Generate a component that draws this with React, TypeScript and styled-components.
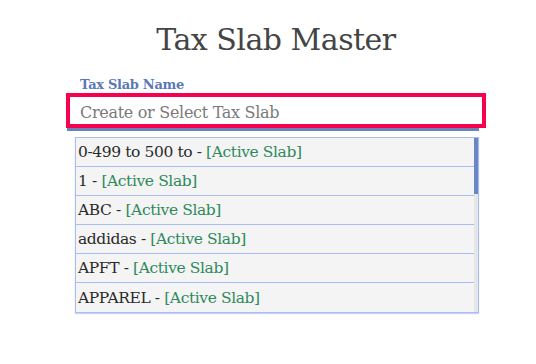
import React from "react";
import styled, { createGlobalStyle } from "styled-components";

const GlobalStyle = createGlobalStyle`
  html, body {
    margin: 0;
    padding: 0;
    background: #ffffff;
  }
  body {
    font-family: "DejaVu Serif", "Liberation Serif", serif;
  }
`;

const slabs = ["0-499 to 500 to", "1", "ABC", "addidas", "APFT", "APPAREL"];

const App: React.FC = () => {
  return (
    <Page>
      <GlobalStyle />
      <Title>Tax Slab Master</Title>
      <Field>
        <Label>Tax Slab Name</Label>
        <InputWrap>
          <Input placeholder="Create or Select Tax Slab" />
        </InputWrap>
        <List>
          <Rows>
            {slabs.map((s) => (
              <Row key={s}>
                {s} - <Status>[Active Slab]</Status>
              </Row>
            ))}
          </Rows>
          <Scroll>
            <Thumb />
          </Scroll>
        </List>
      </Field>
    </Page>
  );
};
export default App;

const Page = styled.div`
  width: 536px;
  height: 364px;
  display: flex;
  flex-direction: column;
  align-items: center;
  box-sizing: border-box;
  padding: 20px 0 0 16px;
`;

const Title = styled.h1`
  margin: 0;
  font-size: 30px;
  font-weight: normal;
  color: #444444;
  letter-spacing: -0.5px;
  line-height: 40px;
`;

const Field = styled.div`
  width: 420px;
  margin-top: 17px;
  display: flex;
  flex-direction: column;
`;

const Label = styled.div`
  font-size: 13px;
  font-weight: bold;
  color: #5b78b4;
  padding-left: 14px;
  line-height: 15px;
  letter-spacing: -0.3px;
`;

const InputWrap = styled.div`
  margin-top: 1px;
  border: 4px solid #f7004d;
  height: 27px;
  display: flex;
  align-items: center;
  position: relative;
  &::after {
    content: "";
    position: absolute;
    left: -3px;
    right: 3px;
    bottom: -7px;
    height: 3px;
    background: #6a82b6;
  }
`;

const Input = styled.input`
  border: none;
  outline: none;
  width: 100%;
  padding: 4px 0 0 10px;
  font-family: "DejaVu Serif", "Liberation Serif", serif;
  font-size: 16px;
  letter-spacing: -0.3px;
  color: #777777;
  background: transparent;
  &::placeholder {
    color: #7a7a7a;
  }
`;

const List = styled.div`
  margin: 9px 7px 0 9px;
  height: 176px;
  box-sizing: border-box;
  border: 1px solid #a8bcf5;
  background: #f4f4f4;
  display: flex;
  overflow: hidden;
  box-shadow: 0 1px 1px #c8d4f0;
`;

const Rows = styled.div`
  flex: 1;
  display: flex;
  flex-direction: column;
`;

const Row = styled.div`
  height: 29px;
  flex: none;
  box-sizing: border-box;
  border-bottom: 1px solid #a8bcf5;
  padding-left: 2px;
  display: flex;
  align-items: center;
  font-size: 15.5px;
  color: #2a2a2a;
  white-space: pre;
  letter-spacing: -0.4px;
  &:last-child {
    border-bottom: none;
  }
`;

const Status = styled.span`
  color: #2e8a5c;
`;

const Scroll = styled.div`
  width: 4px;
  background: #e6e6e6;
  display: flex;
  flex-direction: column;
`;

const Thumb = styled.div`
  height: 56px;
  background: #6a86c6;
`;
